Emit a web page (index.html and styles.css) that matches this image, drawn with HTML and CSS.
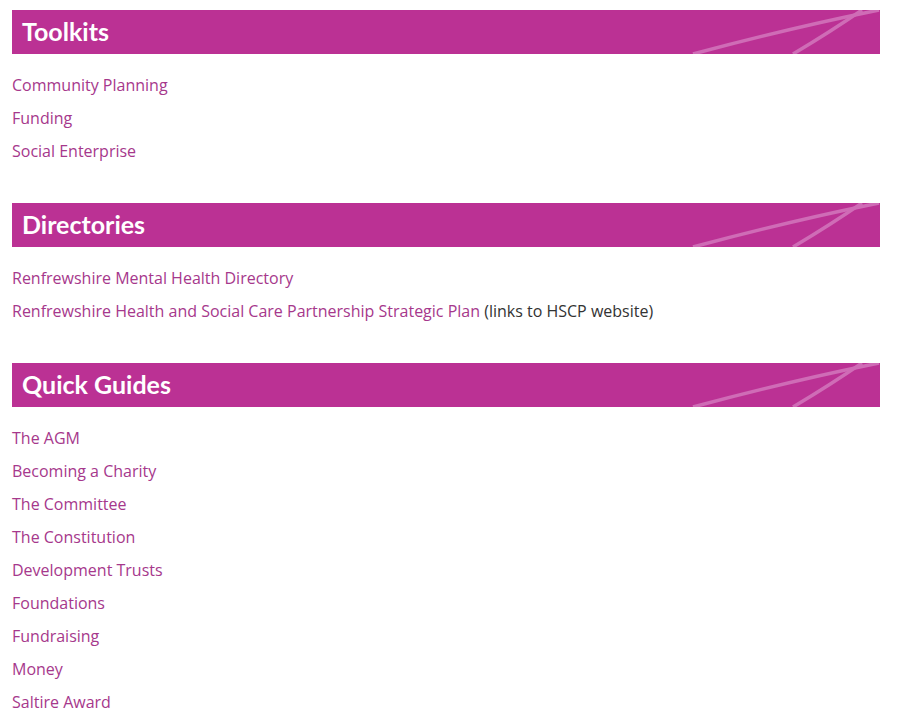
FILE: index.html
```html
<!DOCTYPE html>
<html lang="en">
<head>
<meta charset="utf-8">
<title>Resources</title>
<link rel="stylesheet" href="styles.css">
</head>
<body>
<main class="page">
  <section class="block">
    <h2 class="bar"><span class="bar-title">Toolkits</span>
      <svg class="swoosh" viewBox="0 0 200 44" aria-hidden="true"><path d="M13 44 Q110 18 199 0" /><path d="M113 44 Q150 22 182 0" /></svg>
    </h2>
    <ul class="links">
      <li><a href="#">Community Planning</a></li>
      <li><a href="#">Funding</a></li>
      <li><a href="#">Social Enterprise</a></li>
    </ul>
  </section>
  <section class="block">
    <h2 class="bar"><span class="bar-title">Directories</span>
      <svg class="swoosh" viewBox="0 0 200 44" aria-hidden="true"><path d="M13 44 Q110 18 199 0" /><path d="M113 44 Q150 22 182 0" /></svg>
    </h2>
    <ul class="links">
      <li><a href="#">Renfrewshire Mental Health Directory</a></li>
      <li><a href="#">Renfrewshire Health and Social Care Partnership Strategic Plan</a> <span class="note">(links to HSCP website)</span></li>
    </ul>
  </section>
  <section class="block">
    <h2 class="bar"><span class="bar-title">Quick Guides</span>
      <svg class="swoosh" viewBox="0 0 200 44" aria-hidden="true"><path d="M13 44 Q110 18 199 0" /><path d="M113 44 Q150 22 182 0" /></svg>
    </h2>
    <ul class="links">
      <li><a href="#">The AGM</a></li>
      <li><a href="#">Becoming a Charity</a></li>
      <li><a href="#">The Committee</a></li>
      <li><a href="#">The Constitution</a></li>
      <li><a href="#">Development Trusts</a></li>
      <li><a href="#">Foundations</a></li>
      <li><a href="#">Fundraising</a></li>
      <li><a href="#">Money</a></li>
      <li><a href="#">Saltire Award</a></li>
    </ul>
  </section>
</main>
</body>
</html>
```
FILE: styles.css
```css
html, body {
  margin: 0;
  padding: 0;
  background: #ffffff;
}
body {
  font-family: "Open Sans", "Liberation Sans", sans-serif;
  font-size: 16px;
  color: #333333;
}
.page {
  width: 868px;
  margin: 0 0 0 12px;
  padding-top: 10px;
  display: flex;
  flex-direction: column;
  gap: 35px;
}
.bar {
  position: relative;
  margin: 0;
  height: 44px;
  background: #bb3194;
  display: flex;
  align-items: center;
  padding-left: 10px;
  overflow: hidden;
}
.bar-title {
  font-family: Lato, "Open Sans", sans-serif;
  font-weight: 700;
  font-size: 25px;
  color: #ffffff;
  line-height: 1;
  margin-top: -2px;
}
.swoosh {
  position: absolute;
  right: 0;
  top: 0;
  width: 200px;
  height: 44px;
}
.swoosh path {
  fill: none;
  stroke: #cf6cb6;
  stroke-width: 3.5;
  stroke-linecap: butt;
}
.links {
  list-style: none;
  margin: 15px 0 0 0;
  padding: 0;
}
.links li {
  line-height: 33px;
}
.links a {
  color: #a6388c;
  text-decoration: none;
}
.note {
  color: #333333;
}
```
